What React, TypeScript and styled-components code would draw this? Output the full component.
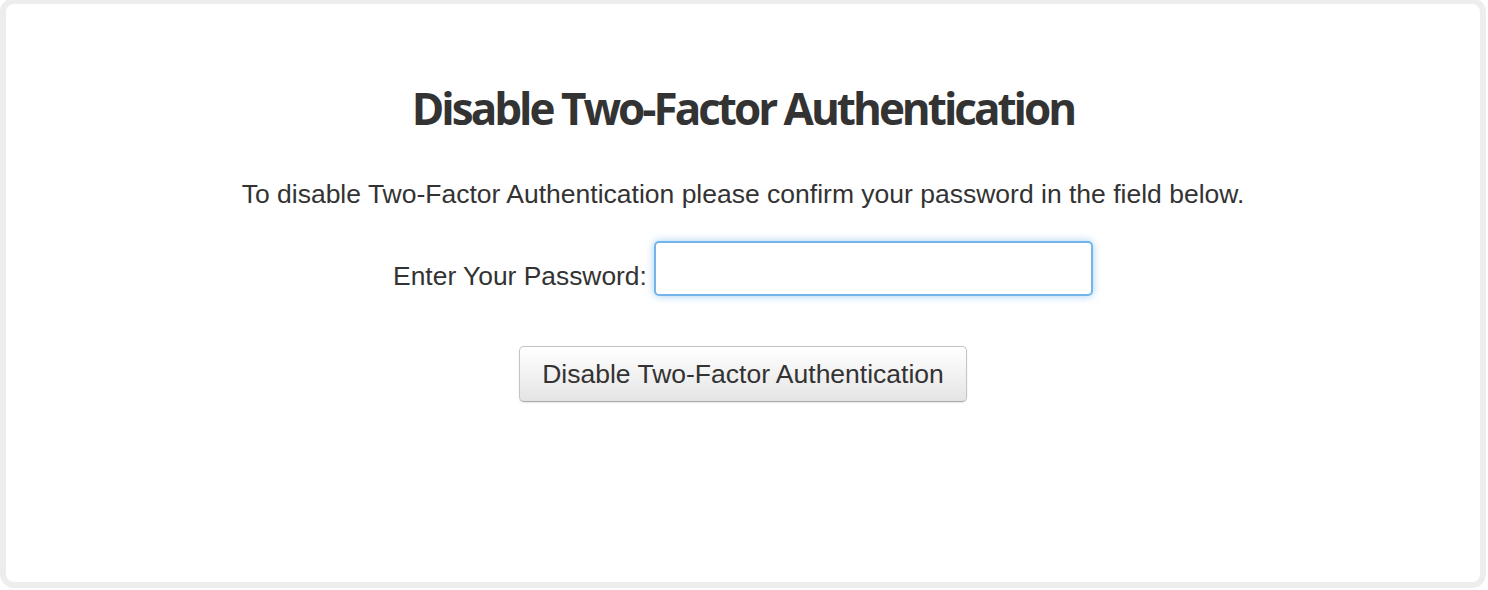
import styled, { createGlobalStyle } from 'styled-components';

const GlobalStyle = createGlobalStyle`
  html, body {
    margin: 0;
    padding: 0;
    background: #ffffff;
  }
  body {
    font-family: 'Liberation Sans', Arial, sans-serif;
    color: #333333;
  }
`;

export default function App() {
  return (
    <>
      <GlobalStyle />
      <Frame>
        <Title>Disable Two-Factor Authentication</Title>
        <Intro>
          To disable Two-Factor Authentication please confirm your password in
          the field below.
        </Intro>
        <FieldRow>
          <Label htmlFor="password">Enter Your Password:</Label>
          <PasswordInput id="password" type="password" />
        </FieldRow>
        <SubmitButton type="button">Disable Two-Factor Authentication</SubmitButton>
      </Frame>
    </>
  );
}

const Frame = styled.div`
  box-sizing: border-box;
  width: 1486px;
  height: 590px;
  margin-top: -2px;
  border: 6px solid #ededed;
  border-radius: 14px;
  background: #ffffff;
  display: flex;
  flex-direction: column;
  align-items: center;
  padding-top: 73px;
`;

const Title = styled.h1`
  margin: 0;
  font-family: 'Open Sans', sans-serif;
  font-weight: 700;
  font-size: 44px;
  letter-spacing: -3px;
  line-height: 62px;
  color: #333333;
`;

const Intro = styled.p`
  margin: 40px 0 0;
  font-size: 26.5px;
  line-height: 30px;
`;

const FieldRow = styled.div`
  margin-top: 32px;
  display: flex;
  align-items: center;
  gap: 7px;
`;

const Label = styled.label`
  font-size: 26.4px;
  line-height: 30px;
  padding-top: 14px;
`;

const PasswordInput = styled.input`
  box-sizing: border-box;
  width: 439px;
  height: 55px;
  border: 2px solid #73b4ea;
  border-radius: 5px;
  outline: none;
  box-shadow: 0 0 8px rgba(102, 175, 233, 0.6);
  padding: 6px 12px;
  font-size: 22px;
`;

const SubmitButton = styled.button`
  margin-top: 50px;
  box-sizing: border-box;
  width: 448px;
  height: 56px;
  border: 1px solid #c4c4c4;
  border-bottom-color: #a8a8a8;
  border-radius: 5px;
  background: linear-gradient(to bottom, #ffffff 0%, #e4e4e4 100%);
  box-shadow: 0 1px 2px rgba(0, 0, 0, 0.1);
  font-family: 'Liberation Sans', Arial, sans-serif;
  font-size: 26.5px;
  color: #333333;
  padding: 0;
  cursor: pointer;
`;
